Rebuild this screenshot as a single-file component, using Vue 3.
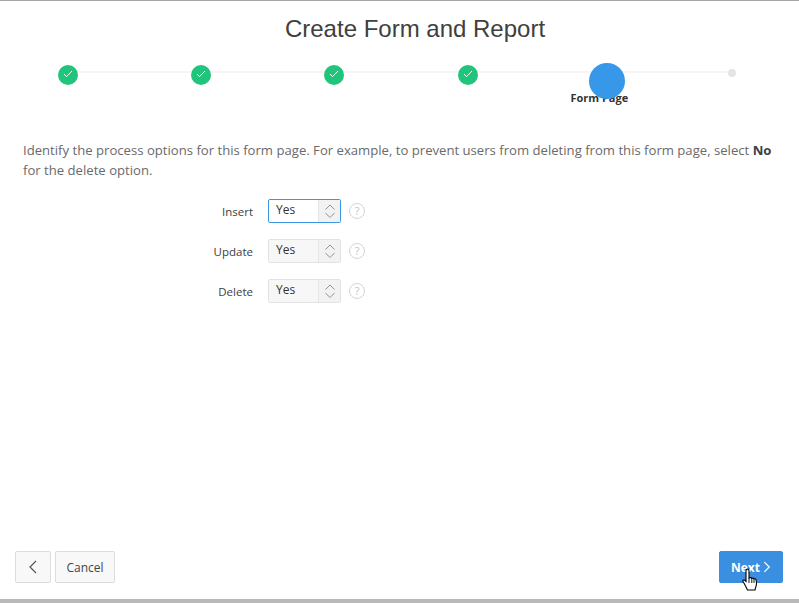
<script setup>
import { ref } from 'vue'

const steps = ref([
  { id: 1, state: 'done' },
  { id: 2, state: 'done' },
  { id: 3, state: 'done' },
  { id: 4, state: 'done' },
  { id: 5, state: 'active', label: 'Form Page' },
  { id: 6, state: 'todo' }
])

const fields = ref([
  { name: 'Insert', value: 'Yes', focused: true },
  { name: 'Update', value: 'Yes', focused: false },
  { name: 'Delete', value: 'Yes', focused: false }
])
</script>

<template>
  <div class="dialog">
    <h1 class="title">Create Form and Report</h1>

    <div class="wizard">
      <div class="wizard-line"></div>
      <div v-for="step in steps" :key="step.id" class="step" :class="step.state">
        <span v-if="step.state === 'done'" class="dot-done">
          <svg width="12" height="12" viewBox="0 0 12 12"><path d="M2 6.200l2.600 2.400L10 3" fill="none" stroke="#fff" stroke-width="1" /></svg>
        </span>
        <span v-else-if="step.state === 'active'" class="dot-active"></span>
        <span v-else class="dot-todo"></span>
        <span v-if="step.label" class="step-label">{{ step.label }}</span>
      </div>
    </div>

    <p class="intro">
      Identify the process options for this form page. For example, to prevent users from deleting from this form page, select <b>No</b> for the delete option.
    </p>

    <div class="form">
      <div v-for="field in fields" :key="field.name" class="form-row">
        <label class="form-label">{{ field.name }}</label>
        <div class="select" :class="{ focused: field.focused }">
          <span class="select-value">{{ field.value }}</span>
          <span class="select-arrows">
            <svg width="12" height="18" viewBox="0 0 12 18"><path d="M1.500 7.500L6 3l4.500 4.500M1.500 11L6 15.500l4.500-4.500" fill="none" stroke="#929292" stroke-width="1" /></svg>
          </span>
        </div>
        <span class="help">?</span>
      </div>
    </div>

    <div class="footer">
      <button class="btn btn-icon">
        <svg width="10" height="14" viewBox="0 0 10 14"><path d="M8 1L2 7l6 6" fill="none" stroke="#555" stroke-width="1.200" /></svg>
      </button>
      <button class="btn btn-cancel">Cancel</button>
      <button class="btn btn-next">
        Next
        <svg width="9" height="14" viewBox="0 0 9 14"><path d="M1.500 1.500L7 7l-5.500 5.500" fill="none" stroke="#fff" stroke-width="1.400" /></svg>
      </button>
      <svg class="cursor" width="17" height="24" viewBox="0 0 17 24">
        <path d="M4.500 1.500c1-.8 2.300-.3 2.500 1V10l1-.3c.8-.2 1.500 0 1.800.6.800-.4 1.600-.2 2 .5.900-.3 1.900.1 2.200 1 .6 1.800.6 4.500 0 6.500l-1 3.700H5.500L2.500 16 1 13.500c-.5-1 .7-2 1.700-1.300L4 13.500V2.500z" fill="#fff" stroke="#000" stroke-width="1.100" />
        <path d="M7 10v5M9.800 10.300V15M12 11v4" stroke="#000" stroke-width=".9" fill="none" />
      </svg>
    </div>
  </div>
</template>

<style scoped>
.dialog {
  position: relative;
  box-sizing: border-box;
  width: 799px;
  height: 603px;
  display: flex;
  flex-direction: column;
  background: #fff;
  border-top: 1px solid #a3a3a3;
  border-bottom: 4px solid #b9b9b9;
  font-family: "Open Sans", "Noto Sans", sans-serif;
  overflow: hidden;
}
.title {
  margin: 13px 0 0 31px;
  text-align: center;
  font-family: "Liberation Sans", Arial, sans-serif;
  font-size: 24px;
  line-height: 30px;
  font-weight: 400;
  color: #404040;
}
.wizard {
  position: relative;
  display: grid;
  grid-template-columns: repeat(6, 133.3px);
  height: 50px;
  margin-top: 21px;
  padding-left: 1px;
}
.wizard-line {
  position: absolute;
  left: 67px;
  top: 6px;
  width: 665px;
  height: 2px;
  background: #f5f5f5;
}
.step {
  position: relative;
  display: flex;
  flex-direction: column;
  align-items: center;
}
.dot-done {
  width: 20px;
  height: 20px;
  border-radius: 50%;
  background: #21c47b;
  display: flex;
  align-items: center;
  justify-content: center;
  padding-bottom: 3px;
  box-sizing: border-box;
  z-index: 1;
}
.dot-active {
  position: absolute;
  left: 50%;
  top: -2px;
  margin-left: -12px;
  width: 36px;
  height: 36px;
  border-radius: 50%;
  background: #3797e8;
  z-index: 2;
}
.dot-todo {
  width: 8px;
  height: 8px;
  margin: 4px 4px 0 0;
  border-radius: 50%;
  background: #e4e4e4;
  z-index: 1;
}
.step-label {
  margin: 26px 3px 0 0;
  font-size: 11px;
  line-height: 14px;
  font-weight: 700;
  color: #333;
  white-space: nowrap;
}
.intro {
  margin: 25px 20px 0 23px;
  font-size: 13.130px;
  line-height: 20px;
  color: #6a6a6a;
}
.intro b {
  color: #404040;
}
.form {
  display: flex;
  flex-direction: column;
  gap: 16px;
  margin-top: 19px;
}
.form-row {
  display: flex;
  align-items: center;
  height: 24px;
}
.form-label {
  width: 253px;
  text-align: right;
  font-size: 11.500px;
  color: #404040;
}
.select {
  box-sizing: border-box;
  width: 73px;
  height: 24px;
  margin-left: 15px;
  display: flex;
  background: #f7f7f7;
  border: 1px solid #e2e2e2;
  border-radius: 2px;
  font-size: 12px;
  color: #333;
}
.select.focused {
  background: #fff;
  border-color: #3b96e6;
}
.select-value {
  flex: 1;
  padding-left: 7px;
  line-height: 19px;
}
.select-arrows {
  width: 21px;
  display: flex;
  align-items: center;
  justify-content: center;
  background: #f2f2f2;
  border-left: 1px solid #e6e6e6;
}
.help {
  box-sizing: border-box;
  width: 16px;
  height: 16px;
  margin-left: 8px;
  border: 1px solid #d4d4d4;
  border-radius: 50%;
  text-align: center;
  font-size: 11px;
  line-height: 14px;
  color: #c4c4c4;
}
.footer {
  position: relative;
  display: flex;
  gap: 4px;
  margin-top: auto;
  padding: 0 16px 16px 15px;
}
.btn {
  box-sizing: border-box;
  height: 32px;
  padding: 0 11px;
  display: flex;
  align-items: center;
  justify-content: center;
  background: #f8f8f8;
  border: 1px solid #dcdcdc;
  border-radius: 2px;
  font-family: inherit;
  font-size: 12px;
  color: #444;
}
.btn-icon {
  width: 36px;
  padding: 0;
}
.btn-cancel {
  width: 60px;
  padding: 0;
}
.btn-next {
  width: 64px;
  margin-left: auto;
  gap: 3px;
  background: #3a8fe0;
  border-color: #3a8fe0;
  color: #fff;
  font-weight: 700;
}
.cursor {
  position: absolute;
  right: 40px;
  top: 17px;
}
</style>

<style>
html, body {
  margin: 0;
  background: #fff;
}
</style>
